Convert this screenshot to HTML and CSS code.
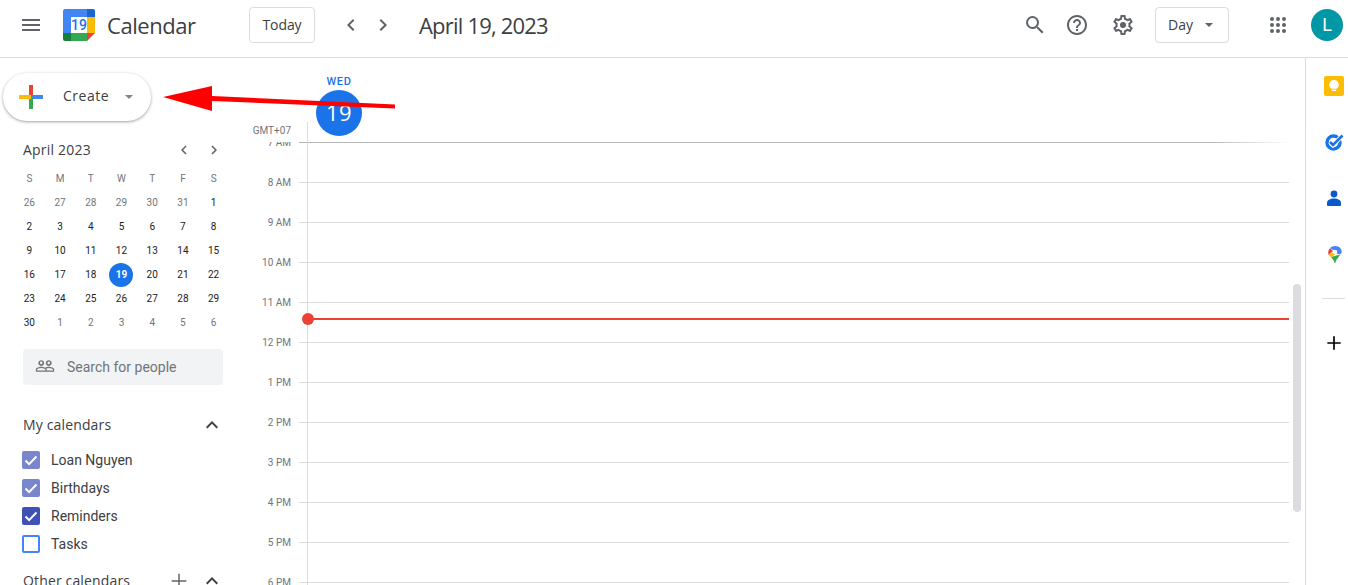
FILE: index.html
```html
<!DOCTYPE html>
<html lang="en">
<head>
<meta charset="utf-8">
<title>Calendar</title>
<link rel="stylesheet" href="styles.css">
</head>
<body>
<div class="app">
  <header class="topbar">
    <div class="brand">
      <svg class="icon menu-icon" viewBox="0 0 24 24"><path d="M3 18h18v-2H3v2zm0-5h18v-2H3v2zm0-7v2h18V6H3z"/></svg>
      <svg class="logo" viewBox="0 0 32 32">
        <path fill="#4285f4" d="M2 0h22v8H8v16H0V2a2 2 0 0 1 2-2z"/>
        <path fill="#1967d2" d="M24 0h6a2 2 0 0 1 2 2v6h-8z"/>
        <path fill="#fbbc04" d="M24 8h8v16h-8z"/>
        <path fill="#34a853" d="M8 24h16v8H8z"/>
        <path fill="#188038" d="M0 24h8v8H2a2 2 0 0 1-2-2z"/>
        <path fill="#ea4335" d="M24 24h8l-8 8z"/>
        <rect x="8" y="8" width="16" height="16" fill="#fff"/>
        <text class="logo-num" x="16" y="21" text-anchor="middle">19</text>
      </svg>
      <span class="app-name">Calendar</span>
    </div>
    <button class="outline-btn today-btn">Today</button>
    <svg class="icon nav-prev" viewBox="0 0 24 24"><path d="M15.41 7.41L14 6l-6 6 6 6 1.41-1.41L10.83 12z"/></svg>
    <svg class="icon nav-next" viewBox="0 0 24 24"><path d="M10 6L8.59 7.41 13.17 12l-4.58 4.59L10 18l6-6z"/></svg>
    <span class="date-title">April 19, 2023</span>
    <svg class="icon search-icon" viewBox="0 0 24 24"><path d="M15.5 14h-.79l-.28-.27A6.471 6.471 0 0 0 16 9.5 6.5 6.5 0 1 0 9.5 16c1.61 0 3.09-.59 4.23-1.57l.27.28v.79l5 4.99L20.49 19l-4.99-5zm-6 0C7.01 14 5 11.99 5 9.5S7.01 5 9.5 5 14 7.01 14 9.5 11.99 14 9.5 14z"/></svg>
    <svg class="icon help-icon" viewBox="0 0 24 24"><path d="M11 18h2v-2h-2v2zm1-16C6.48 2 2 6.48 2 12s4.48 10 10 10 10-4.48 10-10S17.52 2 12 2zm0 18c-4.41 0-8-3.59-8-8s3.59-8 8-8 8 3.59 8 8-3.59 8-8 8zm0-14c-2.21 0-4 1.79-4 4h2c0-1.1.9-2 2-2s2 .9 2 2c0 2-3 1.75-3 5h2c0-2.25 3-2.5 3-5 0-2.21-1.79-4-4-4z"/></svg>
    <svg class="icon gear-icon" viewBox="0 0 24 24"><path d="M19.43 12.98c.04-.32.07-.64.07-.98 0-.34-.03-.66-.07-.98l2.11-1.65c.19-.15.24-.42.12-.64l-2-3.46c-.09-.16-.26-.25-.44-.25-.06 0-.12.01-.17.03l-2.49 1c-.52-.4-1.08-.73-1.69-.98l-.38-2.65C14.46 2.18 14.25 2 14 2h-4c-.25 0-.46.18-.49.42l-.38 2.65c-.61.25-1.17.59-1.69.98l-2.49-1c-.06-.02-.12-.03-.18-.03-.17 0-.34.09-.43.25l-2 3.46c-.13.22-.07.49.12.64l2.11 1.65c-.04.32-.07.65-.07.98 0 .33.03.66.07.98l-2.11 1.65c-.19.15-.24.42-.12.64l2 3.46c.09.16.26.25.44.25.06 0 .12-.01.17-.03l2.49-1c.52.4 1.08.73 1.69.98l.38 2.65c.03.24.24.42.49.42h4c.25 0 .46-.18.49-.42l.38-2.65c.61-.25 1.17-.59 1.69-.98l2.49 1c.06.02.12.03.18.03.17 0 .34-.09.43-.25l2-3.46c.12-.22.07-.49-.12-.64l-2.11-1.65zm-1.98-1.71c.04.31.05.52.05.73 0 .21-.02.43-.05.73l-.14 1.13.89.7 1.08.84-.7 1.21-1.27-.51-1.04-.42-.9.68c-.43.32-.84.56-1.25.73l-1.06.43-.16 1.13-.2 1.35h-1.4l-.19-1.35-.16-1.13-1.06-.43c-.43-.18-.83-.41-1.23-.71l-.91-.7-1.06.43-1.27.51-.7-1.21 1.08-.84.89-.7-.14-1.13c-.03-.31-.05-.54-.05-.74s.02-.43.05-.73l.14-1.13-.89-.7-1.08-.84.7-1.21 1.27.51 1.04.42.9-.68c.43-.32.84-.56 1.25-.73l1.06-.43.16-1.13.2-1.35h1.39l.19 1.35.16 1.13 1.06.43c.43.18.83.41 1.23.71l.91.7 1.06-.43 1.27-.51.7 1.21-1.07.85-.89.7.14 1.13z"/><circle cx="12" cy="12" r="3"/></svg>
    <button class="outline-btn day-btn">Day<svg class="caret" viewBox="0 0 10 5"><path d="M0 0l5 5 5-5z"/></svg></button>
    <svg class="icon apps-icon" viewBox="0 0 24 24"><path d="M6 8a2 2 0 1 0 0-4 2 2 0 0 0 0 4zm6 12a2 2 0 1 0 0-4 2 2 0 0 0 0 4zm-6 0a2 2 0 1 0 0-4 2 2 0 0 0 0 4zm0-6a2 2 0 1 0 0-4 2 2 0 0 0 0 4zm6 0a2 2 0 1 0 0-4 2 2 0 0 0 0 4zm4-8a2 2 0 1 0 4 0 2 2 0 0 0-4 0zm-4 2a2 2 0 1 0 0-4 2 2 0 0 0 0 4zm6 6a2 2 0 1 0 0-4 2 2 0 0 0 0 4zm0 6a2 2 0 1 0 0-4 2 2 0 0 0 0 4z"/></svg>
    <div class="avatar">L</div>
  </header>

  <div class="workspace">
    <aside class="sidebar">
      <button class="create-btn">
        <svg class="create-plus" viewBox="0 0 24 24">
          <rect x="10" y="0" width="4" height="12" fill="#ea4335"/>
          <rect x="12" y="10" width="12" height="4" fill="#4285f4"/>
          <rect x="10" y="12" width="4" height="12" fill="#34a853"/>
          <rect x="0" y="10" width="12" height="4" fill="#fbbc04"/>
        </svg>
        <span class="create-label">Create</span>
        <svg class="caret create-caret" viewBox="0 0 10 5"><path d="M0 0l5 5 5-5z"/></svg>
      </button>

      <div class="mini-head">
        <span class="mini-title">April 2023</span>
        <svg class="mini-chev" viewBox="0 0 24 24"><path d="M15.41 7.41L14 6l-6 6 6 6 1.41-1.41L10.83 12z"/></svg>
        <svg class="mini-chev" viewBox="0 0 24 24"><path d="M10 6L8.59 7.41 13.17 12l-4.58 4.59L10 18l6-6z"/></svg>
      </div>

      <div class="mini-grid">
        <span class="dow">S</span><span class="dow">M</span><span class="dow">T</span><span class="dow">W</span><span class="dow">T</span><span class="dow">F</span><span class="dow">S</span>
        <span class="muted">26</span><span class="muted">27</span><span class="muted">28</span><span class="muted">29</span><span class="muted">30</span><span class="muted">31</span><span>1</span>
        <span>2</span><span>3</span><span>4</span><span>5</span><span>6</span><span>7</span><span>8</span>
        <span>9</span><span>10</span><span>11</span><span>12</span><span>13</span><span>14</span><span>15</span>
        <span>16</span><span>17</span><span>18</span><span class="today"><b>19</b></span><span>20</span><span>21</span><span>22</span>
        <span>23</span><span>24</span><span>25</span><span>26</span><span>27</span><span>28</span><span>29</span>
        <span>30</span><span class="muted">1</span><span class="muted">2</span><span class="muted">3</span><span class="muted">4</span><span class="muted">5</span><span class="muted">6</span>
      </div>

      <div class="people-search">
        <svg class="people-icon" viewBox="0 0 24 24"><path d="M16.5 13c-1.2 0-3.07.34-4.5 1-1.43-.67-3.3-1-4.5-1C5.33 13 1 14.08 1 16.25V19h22v-2.75c0-2.17-4.33-3.25-6.5-3.25zm-4 4.5h-10v-1.25c0-.54 2.56-1.75 5-1.75s5 1.21 5 1.75v1.25zm9 0H14v-1.25c0-.46-.2-.86-.52-1.22.88-.3 1.96-.53 3.02-.53 2.44 0 5 1.21 5 1.75v1.25zM7.5 12c1.93 0 3.5-1.57 3.5-3.5S9.43 5 7.5 5 4 6.57 4 8.5 5.57 12 7.5 12zm0-5.5c.83 0 1.5.67 1.5 1.5s-.67 2-1.5 2S6 8.83 6 8s.67-1.5 1.5-1.5zm9 5.5c1.93 0 3.5-1.57 3.5-3.5S18.43 5 16.5 5 13 6.57 13 8.5s1.57 3.5 3.5 3.5zm0-5.5c.83 0 1.5.67 1.5 1.5s-.67 2-1.5 2-1.5-.67-1.5-1.5.67-1.5 1.5-1.5z"/></svg>
        <span>Search for people</span>
      </div>

      <div class="section-head my-head">
        <span class="section-title">My calendars</span>
        <svg class="section-chev" viewBox="0 0 24 24"><path d="M12 8l-6 6 1.41 1.41L12 10.83l4.59 4.58L18 14z"/></svg>
      </div>
      <ul class="cal-list">
        <li class="cal-row"><span class="check lavender"><svg viewBox="0 0 18 18"><path d="M3.5 9.5l3.6 3.6 7.4-7.6"/></svg></span>Loan Nguyen</li>
        <li class="cal-row"><span class="check lavender"><svg viewBox="0 0 18 18"><path d="M3.5 9.5l3.6 3.6 7.4-7.6"/></svg></span>Birthdays</li>
        <li class="cal-row"><span class="check indigo"><svg viewBox="0 0 18 18"><path d="M3.5 9.5l3.6 3.6 7.4-7.6"/></svg></span>Reminders</li>
        <li class="cal-row"><span class="check empty"></span>Tasks</li>
      </ul>
      <div class="section-head other-head">
        <span class="section-title">Other calendars</span>
        <svg class="section-plus" viewBox="0 0 24 24"><path d="M20 12.8h-7.2V20h-1.6v-7.2H4v-1.6h7.2V4h1.6v7.2H20z"/></svg>
        <svg class="section-chev" viewBox="0 0 24 24"><path d="M12 8l-6 6 1.41 1.41L12 10.83l4.59 4.58L18 14z"/></svg>
      </div>
    </aside>

    <main class="main">
      <div class="day-head">
        <div class="gmt">GMT+07</div>
        <div class="day-col">
          <div class="dow-label">WED</div>
          <div class="day-num">19</div>
        </div>
      </div>
      <div class="hours">
        <div class="hour first"><span class="hour-label">7 AM</span><i class="hour-line"></i></div>
        <div class="hour"><span class="hour-label">8 AM</span><i class="hour-line"></i></div>
        <div class="hour"><span class="hour-label">9 AM</span><i class="hour-line"></i></div>
        <div class="hour"><span class="hour-label">10 AM</span><i class="hour-line"></i></div>
        <div class="hour"><span class="hour-label">11 AM</span><i class="hour-line"></i></div>
        <div class="hour"><span class="hour-label">12 PM</span><i class="hour-line"></i></div>
        <div class="hour"><span class="hour-label">1 PM</span><i class="hour-line"></i></div>
        <div class="hour"><span class="hour-label">2 PM</span><i class="hour-line"></i></div>
        <div class="hour"><span class="hour-label">3 PM</span><i class="hour-line"></i></div>
        <div class="hour"><span class="hour-label">4 PM</span><i class="hour-line"></i></div>
        <div class="hour"><span class="hour-label">5 PM</span><i class="hour-line"></i></div>
        <div class="hour"><span class="hour-label">6 PM</span><i class="hour-line"></i></div>
      </div>
      <div class="vline"></div>
      <div class="now-line"><i class="now-dot"></i></div>
      <div class="scrollbar"></div>
    </main>

    <aside class="addons">
      <svg class="addon keep" viewBox="0 0 20 20">
        <rect width="20" height="20" rx="2" fill="#fbbc04"/>
        <path fill="#fff" d="M10 4a4.700 4.700 0 0 0-2.500 8.700h5A4.700 4.700 0 0 0 10 4z"/>
        <rect x="7.800" y="13.600" width="4.400" height="1.400" fill="#fff"/>
      </svg>
      <svg class="addon tasks" viewBox="0 0 20 20">
        <circle cx="9.500" cy="10.500" r="6.500" fill="none" stroke="#1a73e8" stroke-width="3.400"/>
        <path fill="none" stroke="#fff" stroke-width="4.500" d="M6 10l3 3 8-8"/>
        <path fill="none" stroke="#1a73e8" stroke-width="2.600" d="M6 10l3 3 9.500-9.500"/>
      </svg>
      <svg class="addon contacts" viewBox="0 0 20 20">
        <circle cx="10" cy="6" r="3.400" fill="#0b57d0"/>
        <path fill="#0b57d0" d="M3 17v-2c0-3 3.200-4.500 7-4.500s7 1.500 7 4.500v2a1 1 0 0 1-1 1H4a1 1 0 0 1-1-1z"/>
      </svg>
      <svg class="addon maps" viewBox="0 0 14 17">
        <path fill="#34a853" d="M3 11l9-2.500c-1 3-4 4.500-4.600 8.500h-.8C6.200 14.500 4.500 13 3 11z"/>
        <path fill="#fbbc04" d="M.7 9L7 5.500v3l-3.800 2.800C2 10.500 1.200 9.800.7 9z"/>
        <path fill="#ea4335" d="M2 2.200L5 5 .7 9C-.3 6.500.3 4 2 2.200z"/>
        <path fill="#4285f4" d="M2 2.200C4.500-.5 10-.8 12.500 2.500c1.900 2.500 1.500 4.700-.5 6L7 7V5z"/>
        <circle cx="7" cy="6" r="2.200" fill="#fff"/>
      </svg>
      <div class="addon-divider"></div>
      <svg class="addon-plus" viewBox="0 0 24 24"><path d="M20 13h-7v7h-2v-7H4v-2h7V4h2v7h7z"/></svg>
    </aside>
  </div>

  <svg class="red-arrow" viewBox="0 0 233 39">
    <path fill="#f00" d="M0 12L49 1V11L232 19.500V23.500L49 16V26z"/>
  </svg>
</div>
</body>
</html>
```
FILE: styles.css
```css
* { box-sizing: border-box; }
html, body { margin: 0; height: 100%; overflow: hidden; background: #fff; }
body { font-family: Roboto, "Liberation Sans", sans-serif; color: #3c4043; }
.app { position: relative; height: 585px; display: flex; flex-direction: column; overflow: hidden; }

.topbar { flex: none; height: 58px; display: flex; align-items: center; border-bottom: 1px solid #dadce0; padding-bottom: 7px; padding-top: 0; }
.icon { flex: none; width: 24px; height: 24px; fill: #5f6368; display: block; }
.brand { flex: none; width: 249px; display: flex; align-items: center; padding-left: 19px; }
.logo { width: 32px; height: 32px; margin-left: 20px; flex: none; }
.logo-num { font: 500 14px Roboto, sans-serif; fill: #1a73e8; }
.app-name { margin-left: 12px; padding-bottom: 1px; font: 400 22px/28px "Open Sans", sans-serif; letter-spacing: -.45px; color: #3c4043; }

.outline-btn { flex: none; height: 36px; border: 1px solid #dadce0; border-radius: 4px; background: #fff; color: #3c4043; font: 500 14px "Open Sans", sans-serif; padding: 0 0 2px; }
.today-btn { width: 66px; letter-spacing: -.1px; }
.nav-prev { margin-left: 24px; }
.nav-next { margin-left: 8px; }
.date-title { margin-left: 24px; padding-bottom: 1px; font: 400 22px/28px "Open Sans", sans-serif; letter-spacing: -.8px; white-space: nowrap; }
.search-icon { margin-left: auto; }
.help-icon { margin-left: 18px; }
.gear-icon { margin-left: 22px; }
.day-btn { width: 74px; margin-left: 20px; display: flex; align-items: center; padding-left: 12px; font-weight: 400; }
.caret { width: 8px; height: 4px; fill: #5f6368; display: block; }
.day-btn .caret { margin-left: 12px; margin-top: 2px; }
.apps-icon { margin-left: 37px; }
.avatar { flex: none; width: 32px; height: 32px; border-radius: 50%; background: #0097a7; color: #fff; margin-left: 21px; margin-right: 5px; font: 400 18px/32px Roboto, sans-serif; text-align: center; }

.workspace { flex: 1; min-height: 0; display: flex; }

.sidebar { flex: none; width: 245px; padding-top: 15px; overflow: hidden; }
.create-btn { width: 148px; height: 48px; margin-left: 3px; display: flex; align-items: center; padding: 0 0 0 16px; border: 0; border-radius: 24px; background: #fff; box-shadow: 0 1px 2px rgba(60,64,67,.3), 0 1px 3px 1px rgba(60,64,67,.15); }
.create-plus { width: 24px; height: 24px; flex: none; }
.create-label { margin-left: 20px; padding-bottom: 3px; font: 500 14px "Open Sans", sans-serif; letter-spacing: .5px; color: #3c4043; }
.create-caret { margin-left: 16px; fill: #80868b; }

.mini-head { margin: 17px 16px 0 23px; height: 24px; display: flex; align-items: center; }
.mini-title { flex: 1; padding-bottom: 2px; font: 400 14px "Open Sans", sans-serif; letter-spacing: .2px; }
.mini-chev { width: 18px; height: 18px; fill: #5f6368; flex: none; margin: 0 6px; }

.mini-grid { margin: 5px 0 0 14px; width: 215px; display: grid; grid-template-columns: repeat(7, 1fr); grid-auto-rows: 24px; font-size: 10px; font-weight: 400; text-align: center; line-height: 24px; color: #202124; }
.mini-grid .dow { color: #70757a; }
.mini-grid .muted { color: #70757a; }
.mini-grid .today b { display: block; width: 24px; height: 24px; margin: 0 auto; border-radius: 50%; background: #1a73e8; color: #fff; font-weight: 700; }

.people-search { margin: 14px 0 0 23px; width: 200px; height: 36px; background: #f1f3f4; border-radius: 4px; display: flex; align-items: center; padding-left: 12px; font-size: 14px; color: #70757a; }
.people-icon { width: 20px; height: 20px; fill: #70757a; margin-right: 12px; flex: none; position: relative; top: -1px; }

.section-head { height: 24px; display: flex; align-items: center; margin-left: 23px; width: 200px; }
.my-head { margin-top: 28px; }
.other-head { margin-top: 11px; }
.section-title { flex: 1; padding-bottom: 2px; font: 500 14px "Open Sans", sans-serif; letter-spacing: .15px; color: #3c4043; white-space: nowrap; }
.section-chev { width: 24px; height: 24px; fill: #3c4043; flex: none; margin-right: -1px; }
.section-plus { width: 22px; height: 22px; fill: #5f6368; flex: none; margin-right: 10px; }

.cal-list { list-style: none; margin: 9px 0 0; padding: 0 0 0 22px; }
.cal-row { height: 28px; display: flex; align-items: center; font-size: 14px; color: #3c4043; }
.check { flex: none; width: 18px; height: 18px; border-radius: 2px; margin-right: 11px; display: block; }
.check svg { display: block; width: 18px; height: 18px; fill: none; stroke: #fff; stroke-width: 2; }
.lavender { background: #7986cb; }
.indigo { background: #3f51b5; }
.empty { border: 2px solid #4285f4; }

.main { position: relative; flex: 1; min-width: 0; overflow: hidden; }
.day-head { height: 84px; display: flex; }
.gmt { width: 46px; height: 84px; flex: none; text-align: right; font-size: 10px; line-height: 12px; color: #70757a; padding-top: 67px; }
.day-col { margin-left: 25px; width: 46px; display: flex; flex-direction: column; align-items: center; padding-top: 18px; }
.dow-label { font-size: 11px; font-weight: 500; line-height: 12px; letter-spacing: .6px; color: #1a73e8; }
.day-num { margin-top: 2px; width: 46px; height: 46px; flex: none; border-radius: 50%; background: #1a73e8; color: #fff; text-align: center; font: 400 22px/44px "Open Sans", sans-serif; letter-spacing: .5px; }

.hours { overflow: hidden; height: 443px; }
.hour { display: flex; height: 40px; }
.hour-label { width: 46px; flex: none; text-align: right; font-size: 10px; line-height: 12px; height: 12px; margin-top: -5px; color: #70757a; white-space: nowrap; }
.hour-line { display: block; margin-left: 8px; width: 990px; height: 1px; background: #dadce0; }
.first .hour-line { background: linear-gradient(to right, #b4b6b8 0, #b4b6b8 92%, #fff 100%); }

.vline { position: absolute; left: 62px; top: 64px; bottom: 0; width: 1px; background: #dadce0; }
.now-line { position: absolute; left: 63px; top: 260px; width: 981px; height: 2px; background: #ea4335; }
.now-dot { position: absolute; left: -6px; top: -5px; width: 12px; height: 12px; border-radius: 50%; background: #ea4335; }
.scrollbar { position: absolute; left: 1048px; top: 226px; width: 8px; height: 228px; border-radius: 4px; background: #dadce0; }

.addons { flex: none; width: 43px; border-left: 1px solid #dadce0; display: flex; flex-direction: column; align-items: flex-start; padding: 18px 0 0 18px; }
.addon { display: block; flex: none; width: 20px; height: 20px; }
.tasks { margin-top: 36px; }
.contacts { margin-top: 36px; }
.addon.maps { margin: 38px 0 0 4px; width: 14px; height: 17px; }
.addon-divider { width: 23px; height: 1px; background: #dadce0; margin: 35px 0 0 -2px; flex: none; }
.addon-plus { width: 20px; height: 20px; fill: #000; margin-top: 34px; flex: none; }

.red-arrow { position: absolute; left: 163px; top: 85px; width: 233px; height: 39px; }
```
